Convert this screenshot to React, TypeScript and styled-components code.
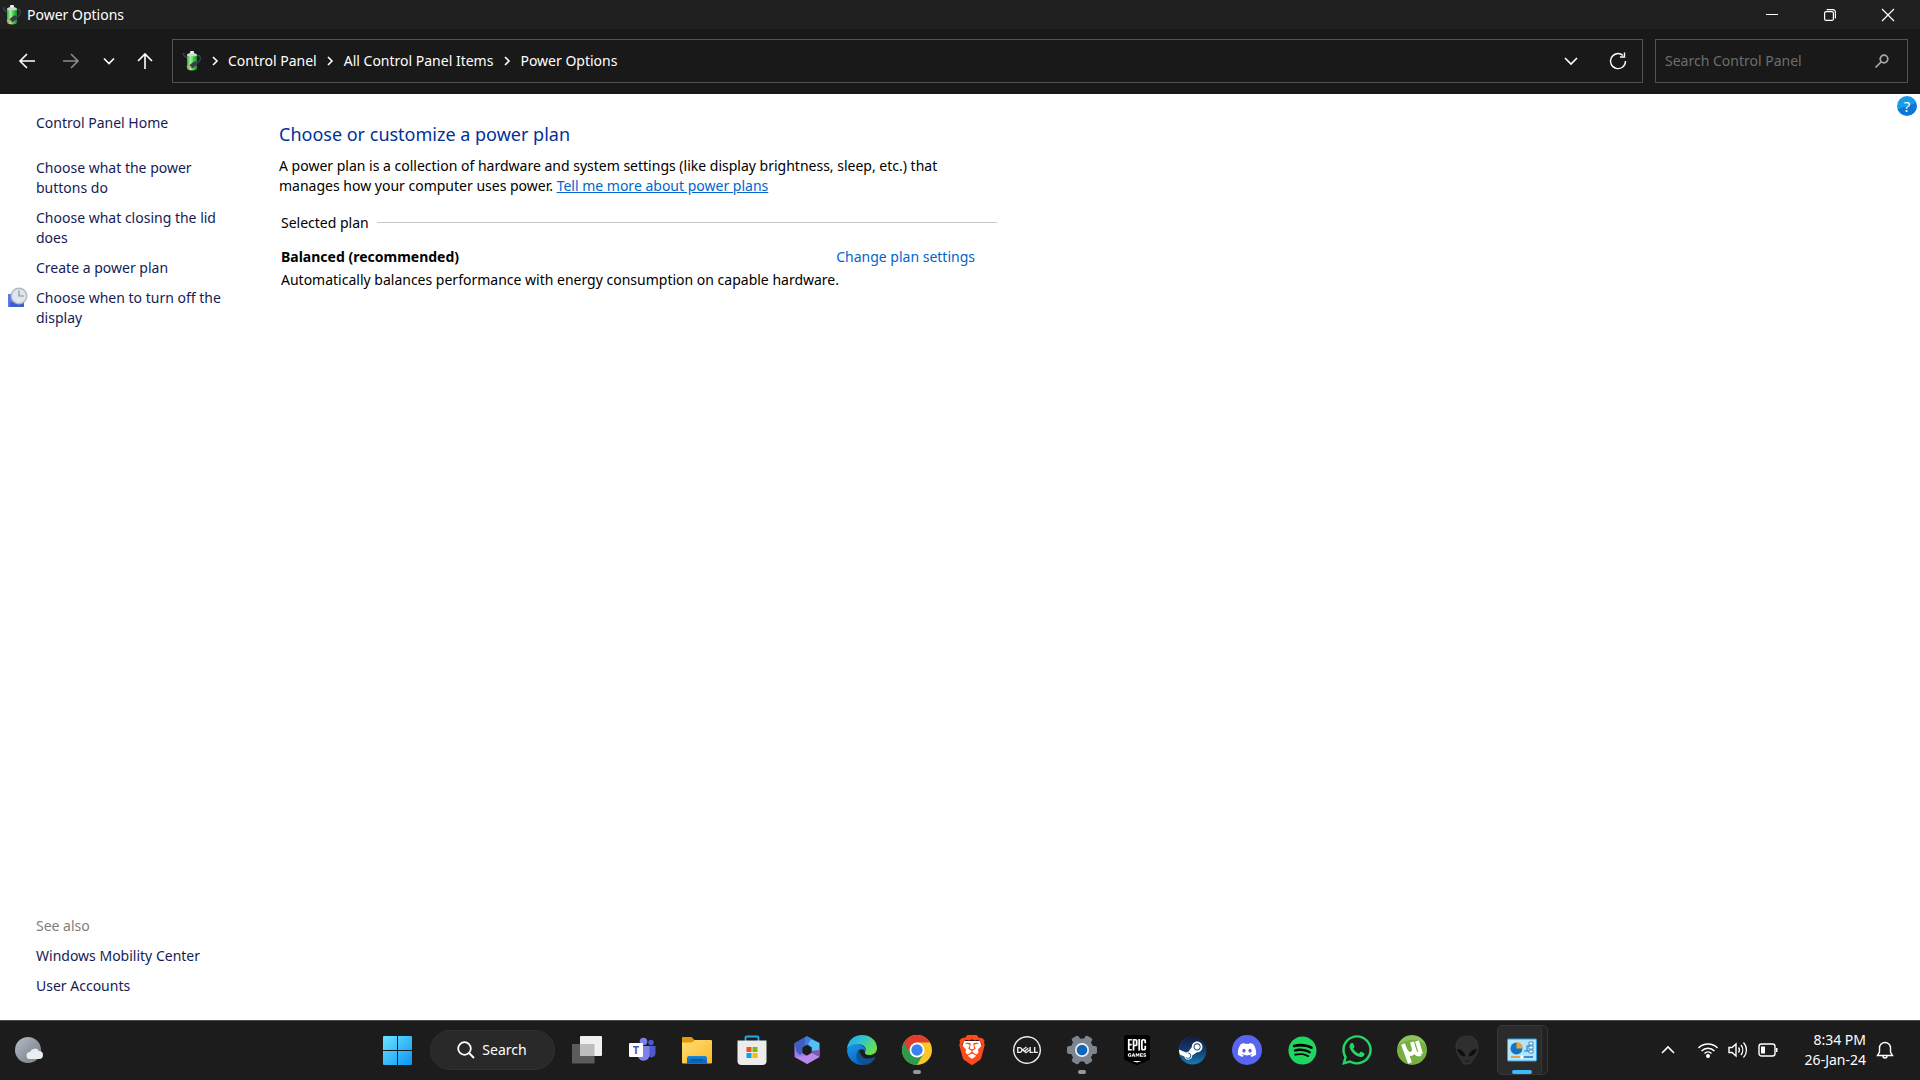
import React from "react";
import styled, { createGlobalStyle } from "styled-components";
import { FaDiscord, FaSpotify, FaSteam, FaWhatsapp } from "react-icons/fa";
import { SiBrave, SiDell, SiEpicgames } from "react-icons/si";

const GlobalStyle = createGlobalStyle`
  * { box-sizing: border-box; }
  body {
    margin: 0;
    background: #fff;
    color: #000;
    font-family: "Noto Sans", "Open Sans", sans-serif;
    font-size: 14px;
    line-height: 20px;
  }
  button, input { font: inherit; color: inherit; }
  button { border: 0; padding: 0; margin: 0; background: none; }
  a { text-decoration: none; color: inherit; }
  svg { display: block; flex: none; overflow: visible; }
`;

const Window = styled.div`
  min-height: 100vh;
  display: flex;
  flex-direction: column;
`;

/* ---------- title bar ---------- */
const TitleBar = styled.header`
  display: flex;
  align-items: center;
  height: 29px;
  padding: 0 3px;
  gap: 6px;
  background: #202020;
  color: #fff;
`;
const WindowTitle = styled.h1`
  flex: 1;
  margin: 0;
  font-size: 14px;
  font-weight: 400;
`;
const WindowControls = styled.div`
  display: flex;
`;
const IconButton = styled.button<{ $w: number; $h: number; $dim?: boolean }>`
  display: flex;
  flex: none;
  align-items: center;
  justify-content: center;
  width: ${(p) => p.$w}px;
  height: ${(p) => p.$h}px;
  color: ${(p) => (p.$dim ? "#8c8c8c" : "#fff")};
`;

/* ---------- navigation bar ---------- */
const NavBar = styled.nav`
  display: flex;
  align-items: center;
  height: 65px;
  padding: 0 12px 1px 8px;
  background: #191919;
  color: #fff;
`;
const HistoryButtons = styled.div`
  display: flex;
  padding-right: 4px;
`;
const AddressBar = styled.div`
  flex: 1;
  display: flex;
  align-items: center;
  height: 44px;
  padding: 0 0 0 10px;
  border: 1px solid #535353;
`;
const Crumbs = styled.ol`
  flex: 1;
  display: flex;
  align-items: center;
  margin: 0;
  padding: 0;
  list-style: none;
`;
const Crumb = styled.li`
  display: flex;
  align-items: center;
`;
const CrumbArrow = styled.span`
  display: flex;
  justify-content: center;
  width: 27px;
`;
const SearchBox = styled.label`
  display: flex;
  align-items: center;
  width: 253px;
  height: 44px;
  margin-left: 12px;
  padding: 0 18px 0 9px;
  border: 1px solid #535353;
`;
const SearchInput = styled.input`
  flex: 1;
  min-width: 0;
  padding: 0;
  border: 0;
  outline: 0;
  background: none;
  &::placeholder { color: #6d6d6d; opacity: 1; }
`;

/* ---------- body ---------- */
const Body = styled.div`
  flex: 1;
  display: flex;
`;
const Sidebar = styled.aside`
  display: flex;
  flex-direction: column;
  justify-content: space-between;
  width: 279px;
  padding: 19px 50px 24px 8px;
  color: #151c55;
`;
const TaskList = styled.ul`
  display: flex;
  flex-direction: column;
  gap: 10px;
  margin: 0;
  padding: 0;
  list-style: none;
`;
const TaskItem = styled.li`
  display: grid;
  grid-template-columns: 20px 1fr;
  column-gap: 8px;
`;
const TaskLink = styled.a`
  grid-column: 2;
`;
const HomeLink = styled.a`
  display: block;
  padding: 0 0 25px 28px;
`;
const SeeAlso = styled.h2`
  margin: 0 0 10px 28px;
  color: #808080;
  font-size: 14px;
  font-weight: 400;
`;
const Main = styled.main`
  flex: 0 1 718px;
  padding-top: 26px;
`;
const Heading = styled.h2`
  margin: 0;
  color: #003399;
  font-size: 18px;
  font-weight: 400;
  line-height: 28px;
`;
const Intro = styled.p`
  max-width: 690px;
  margin: 8px 0 0;
`;
const InlineLink = styled.a`
  color: #0066cc;
  text-decoration: underline;
`;
const PlanGroup = styled.section`
  padding-left: 2px;
`;
const PlanLegend = styled.h3`
  display: flex;
  align-items: center;
  gap: 8px;
  margin: 17px 0 14px;
  font-size: 14px;
  font-weight: 400;
  &::after {
    content: "";
    flex: 1;
    height: 1px;
    margin-bottom: 2px;
    background: #c8c8c8;
  }
`;
const PlanRow = styled.div`
  display: flex;
  justify-content: space-between;
  padding-right: 22px;
`;
const PlanName = styled.strong`
  font-weight: 700;
`;
const PlanSettings = styled.a`
  color: #0066cc;
`;
const PlanNote = styled.p`
  margin: 3px 0 0;
`;
const HelpButton = styled.button`
  width: 20px;
  height: 20px;
  margin: 2px 3px 0 auto;
  border-radius: 50%;
  background: linear-gradient(160deg, #1a9be6 50%, #0a78d6 50%);
  color: #fff;
  font-size: 15px;
`;

/* ---------- taskbar ---------- */
const Taskbar = styled.footer`
  display: grid;
  grid-template-columns: 1fr auto 1fr;
  align-items: center;
  height: 60px;
  box-shadow: inset 0 1px #484848;
  background: #1c1c1c;
  color: #fff;
`;
const WeatherButton = styled.button`
  justify-self: start;
  margin-left: 14px;
`;
const Apps = styled.div`
  display: flex;
  align-items: center;
  padding-right: 1px;
`;
const AppButton = styled.button`
  position: relative;
  display: flex;
  align-items: center;
  justify-content: center;
  width: 55px;
  height: 50px;
`;
const AppCard = styled.span`
  position: absolute;
  inset: 0 8px 0 2px;
  border: 1px solid #373737;
  border-radius: 5px;
  background: #2b2b2b;
`;
const AppCardBehind = styled(AppCard)`
  inset: 0 2px 0 8px;
  background: #222;
`;
const AppGlyph = styled.span`
  position: relative;
  display: flex;
`;
const RunMark = styled.span<{ $active?: boolean }>`
  position: absolute;
  bottom: 1px;
  width: ${(p) => (p.$active ? 20 : 8)}px;
  height: 4px;
  border-radius: 2px;
  background: ${(p) => (p.$active ? "#3db8ff" : "#999")};
`;
const SearchPill = styled.button`
  display: flex;
  align-items: center;
  justify-content: center;
  gap: 7px;
  width: 125px;
  height: 40px;
  margin: 0 5px;
  border: 1px solid #303030;
  border-radius: 20px;
  background: #292929;
`;
const Tray = styled.div`
  display: flex;
  align-items: center;
  justify-self: end;
  padding-right: 24px;
`;
const QuickSettings = styled.button`
  display: flex;
  gap: 10px;
  padding: 0 20px 0 18px;
`;
const Clock = styled.button`
  width: 68px;
  margin-right: 8px;
  text-align: right;
`;
const ClockLine = styled.span`
  display: block;
`;

/* ---------- drawings ---------- */
const line = { fill: "none", stroke: "currentColor", strokeWidth: 1.6 } as const;

const PowerIcon = () => (
  <svg width="18" height="20" viewBox="0 0 18 20">
    <defs>
      <linearGradient id="cell" x1="0" y1="0" x2="1" y2="0">
        <stop offset="0" stopColor="#2fae3e" /><stop offset="0.350" stopColor="#9df29a" /><stop offset="0.700" stopColor="#35c545" /><stop offset="1" stopColor="#178a2c" />
      </linearGradient>
    </defs>
    <path d="M.5 2c0 2 1 4 4 5M13 5c4-1.500 5 1 4 4-.8 2.500-3 3-4 4" fill="none" stroke="#39415c" strokeWidth="1.400" />
    <path d="M4 3h10v14.500c0 2.500-10 2.500-10 0z" fill="url(#cell)" />
    <path d="M4 4.500C4 .8 14 .8 14 4.500c-2 1.200-8 1.200-10 0z" fill="#cfd6d3" />
    <rect x="7" y="0" width="4" height="2.500" rx="1" fill="#eef1f0" />
    <path d="M6 14.500l5-4 4 .5-1 3-5 3.500z" fill="#3b3f45" />
    <path d="M3.500 15.500l3-1.500 2.500 2.500-3 1.500z" fill="#d0a878" />
  </svg>
);
const Arrow = ({ d }: { d: string }) => (
  <svg width="18" height="18" viewBox="0 0 18 18"><path d={d} {...line} /></svg>
);
const Chevron = ({ d, size = 14 }: { d: string; size?: number }) => (
  <svg width={size} height={size} viewBox="0 0 14 14"><path d={d} {...line} /></svg>
);
const DisplayClock = () => (
  <svg width="20" height="20" viewBox="0 0 20 20">
    <path d="M0 6h16v13H0z" fill="#5b7be0" />
    <path d="M2 14h14v5H2z" fill="#3d5fd2" />
    <circle cx="11" cy="8" r="8.500" fill="#b4b9bf" />
    <circle cx="11" cy="8" r="7" fill="#dfe7ee" />
    <path d="M11 2.500V8h5" fill="none" stroke="#8292a2" strokeWidth="1.200" />
  </svg>
);
const Weather = () => (
  <svg width="30" height="28" viewBox="0 0 30 28">
    <defs>
      <linearGradient id="moon" x1="0" y1="0" x2="1" y2="1">
        <stop offset="0" stopColor="#b6bfcc" /><stop offset="0.600" stopColor="#8b929b" /><stop offset="1" stopColor="#7d8f9e" />
      </linearGradient>
    </defs>
    <circle cx="14" cy="14" r="13" fill="url(#moon)" />
    <path d="M16 23a3.500 3.500 0 0 1 0-7 5 5 0 0 1 9-1 4 4 0 0 1 0 8z" fill="#e9eef0" />
  </svg>
);
const Svg30 = ({ children }: { children: React.ReactNode }) => (
  <svg width="30" height="30" viewBox="0 0 30 30">{children}</svg>
);
const WindowsLogo = () => (
  <Svg30>
    <defs>
      <linearGradient id="win" gradientUnits="userSpaceOnUse" x1="0" y1="0" x2="30" y2="30">
        <stop offset="0" stopColor="#6fe6ff" /><stop offset="1" stopColor="#0a95f5" />
      </linearGradient>
    </defs>
    <path d="M2 1h13v14H1V2a1 1 0 0 1 1-1zM16 1h13a1 1 0 0 1 1 1v13H16zM1 16h14v14H2a1 1 0 0 1-1-1zM16 16h14v13a1 1 0 0 1-1 1H16z" fill="url(#win)" />
  </Svg30>
);
const TaskView = () => (
  <Svg30>
    <rect x="0" y="9" width="22.500" height="19.500" rx="1" fill="#5b5b5b" />
    <rect x="8" y="1" width="22" height="20" rx="1" fill="#f0f0f0" />
    <rect x="8" y="9" width="14.500" height="12" fill="#bdbdbd" />
  </Svg30>
);
const Teams = () => (
  <Svg30>
    <circle cx="24" cy="7.500" r="2.700" fill="#5059c9" />
    <path d="M20 11h8.500v7.500a4 4 0 0 1-7 2.500z" fill="#5059c9" />
    <circle cx="16.500" cy="6.500" r="3.800" fill="#7b83eb" />
    <path d="M11 11h11.500v9a6 6 0 0 1-11.500 2z" fill="#7b83eb" />
    <rect x="2" y="8" width="14" height="14" rx="1" fill="#fff" />
    <text x="9" y="19" textAnchor="middle" fontSize="11" fontWeight="700" fill="#5059c9">T</text>
  </Svg30>
);
const Folder = () => (
  <Svg30>
    <defs>
      <linearGradient id="fold" x1="0" y1="0" x2="1" y2="1">
        <stop offset="0" stopColor="#ffdd73" /><stop offset="1" stopColor="#fbb92a" />
      </linearGradient>
      <linearGradient id="foldb" x1="0" y1="0" x2="0" y2="1">
        <stop offset="0" stopColor="#1787dc" /><stop offset="1" stopColor="#0b5fb0" />
      </linearGradient>
    </defs>
    <path d="M0 3a1 1 0 0 1 1-1h8.500l3 3H24v6H0z" fill="#e09a0b" />
    <path d="M0 7.500h10L13 5h16a1 1 0 0 1 1 1v21.500a1 1 0 0 1-1 1H1a1 1 0 0 1-1-1z" fill="url(#fold)" />
    <path d="M5 28.500V23a2 2 0 0 1 2-2h16a2 2 0 0 1 2 2v5.500z" fill="url(#foldb)" />
    <path d="M9 25h12" stroke="#0a4a92" strokeWidth="1.200" />
  </Svg30>
);
const Store = () => (
  <Svg30>
    <path d="M8.500 7V2.500a1 1 0 0 1 1-1h11a1 1 0 0 1 1 1V7" fill="none" stroke="#25a9ee" strokeWidth="1.800" />
    <path d="M.5 5.500h29v20.500a4 4 0 0 1-4 4h-21a4 4 0 0 1-4-4z" fill="#ececec" />
    <path d="M9.500 12h5v5h-5z" fill="#f25022" /><path d="M15.500 12h5v5h-5z" fill="#7fba00" />
    <path d="M9.500 18h5v5h-5z" fill="#00a4ef" /><path d="M15.500 18h5v5h-5z" fill="#ffb900" />
  </Svg30>
);
const Office = () => (
  <Svg30>
    <path d="M15 1l12.500 7-8 4.500L15 10l-4.500 2.500V4z" fill="#3f7fe0" />
    <path d="M27.500 8v13l-8-4v-5L16 9l3-4.500z" fill="#55c0f5" />
    <path d="M27.500 15v7L15 29v-8.500l4.500-3V16z" fill="#8058ab" />
    <path d="M15 29L2.500 22l6-3.500 6.500 2 4.500-2.500 8 4z" fill="#b98aec" />
    <path d="M2.500 22V8l8 4.500V18l4 3z" fill="#9a7bea" />
    <path d="M2.500 8L13 2v9l-3 2v5l-2 2-3.500-3z" fill="#3f5fc4" />
    <path d="M15 10l4.500 2.500v5L15 20.500l-4.500-3v-5z" fill="#1c1c1c" />
  </Svg30>
);
const Edge = () => (
  <Svg30>
    <defs>
      <linearGradient id="edt" x1="0" y1="0" x2="1" y2="0.500">
        <stop offset="0" stopColor="#2aa6e8" /><stop offset="0.500" stopColor="#2fc3cf" /><stop offset="1" stopColor="#6be04a" />
      </linearGradient>
      <linearGradient id="edb" x1="0" y1="0" x2="0.500" y2="1">
        <stop offset="0" stopColor="#1b9de2" /><stop offset="1" stopColor="#0b62c9" />
      </linearGradient>
    </defs>
    <path d="M0 14C1 5 7 0 15 0c9 0 15 6 15 13 0 5-4 7-7.500 7-4 0-5-1.500-4.500-3 2-4-1-7-5-7.500C7 9 2 11 0 14z" fill="url(#edt)" />
    <path d="M0 15c1-4 6-6.500 11-6 5 .5 8 4 7 7.500-1-3-6-3.500-7.500 1C9 22 13 29 17 30 8 31 0 24 0 15z" fill="url(#edb)" />
    <path d="M11 16c-4 6 0 13 6 14 5 0 9-3 11-7 .5-1-.5-1.200-1-.8-6 3-13 1-14-5z" fill="#12518f" />
  </Svg30>
);
const Chrome = () => (
  <Svg30>
    <circle cx="15" cy="15" r="15" fill="#fcc52a" />
    <path d="M15 15L2 7.500A15 15 0 0 0 15 30l6.500-11.200z" fill="#2a9c4c" />
    <path d="M15 7.500h13A15 15 0 0 0 2 7.500L8.500 18.700z" fill="#e33b2e" />
    <circle cx="15" cy="15" r="7.500" fill="#fff" />
    <circle cx="15" cy="15" r="5.700" fill="#3b82f0" />
  </Svg30>
);
const Stack = styled.span`
  display: grid;
  place-items: center;
  > * { grid-area: 1 / 1; }
`;
const Brave = () => (
  <Stack>
    <Svg30><path d="M7 6h16l2 6-5 12-5 3-5-3-5-12z" fill="#fff" /></Svg30>
    <SiBrave size={30} color="#ff4a1c" />
  </Stack>
);
const Gear = () => (
  <Svg30>
    <g fill="#7c858d">
      <circle cx="15" cy="15" r="11.500" />
      {[0, 60, 120].map((a) => (
        <rect key={a} x="0" y="11" width="30" height="8" rx="2" transform={`rotate(${a} 15 15)`} />
      ))}
    </g>
    <circle cx="15" cy="15" r="7" fill="#eef1f3" />
    <circle cx="15" cy="15" r="5.300" fill="#0f66b8" />
  </Svg30>
);
const Epic = () => (
  <Stack>
    <Svg30><path d="M4 2h22v22l-11 4-11-4z" fill="#fff" /></Svg30>
    <SiEpicgames size={30} color="#000" />
  </Stack>
);
const Steam = () => (
  <Stack>
    <Svg30>
      <defs>
        <linearGradient id="stm" gradientUnits="userSpaceOnUse" x1="0" y1="0" x2="0" y2="512">
          <stop offset="0" stopColor="#131c3f" /><stop offset="0.500" stopColor="#123c70" /><stop offset="1" stopColor="#1580b8" />
        </linearGradient>
      </defs>
      <circle cx="15" cy="15" r="13" fill="#fff" />
    </Svg30>
    <FaSteam size={29} fill="url(#stm)" />
  </Stack>
);
const Discord = () => (
  <Stack>
    <Svg30><circle cx="15" cy="15" r="15" fill="#5865f2" /></Svg30>
    <FaDiscord size={20} color="#fff" />
  </Stack>
);
const Spotify = () => (
  <Stack>
    <Svg30><circle cx="15" cy="15" r="13" fill="#000" /></Svg30>
    <FaSpotify size={29} color="#1ed760" />
  </Stack>
);
const Torrent = () => (
  <Svg30>
    <circle cx="15" cy="15" r="15" fill="#76b043" />
    <path d="M1 10A15 15 0 0 1 29 10C20 2 10 4 1 10z" fill="#8cc45a" />
    <path d="M6 9l7 19M8.500 15c2 6 9 5 8.500-1L15 7M17 14c1 5 4 6 7 5M24 19L20 6" fill="none" stroke="#fff" strokeWidth="4" />
  </Svg30>
);
const Alien = () => (
  <Svg30>
    <path d="M15 1C8 1 4 5 4 12c0 7 5 13 8 17h6c3-4 8-10 8-17C26 5 22 1 15 1z" fill="#2f2f2f" stroke="#3a3a3a" strokeWidth="0.800" />
    <path d="M5 14c4 0 8 3 8.500 7.500C9 21.500 6 18 5 14zM25 14c-4 0-8 3-8.500 7.500 4.500 0 7.500-3.500 8.500-7.500z" fill="#0e0e0e" />
    <path d="M13 26h4" stroke="#151515" />
  </Svg30>
);
const ControlPanel = () => (
  <Svg30>
    <rect x="0.500" y="4" width="29" height="22" rx="1" fill="#b4e4fb" stroke="#2a9fe0" />
    <circle cx="9.500" cy="13.500" r="6" fill="#0f76c6" />
    <path d="M9.500 13.500V7a6.500 6.500 0 0 1 6 6.500z" fill="#f2a12a" />
    <path d="M17 16h3v-5h3M20 16h3" fill="none" stroke="#1673b9" />
    <path d="M22 7h4v3h-4zM22 11h4v3h-4zM22 15h4v3h-4z" fill="#fff" stroke="#1673b9" strokeWidth="0.800" />
    <path d="M4 22h11" stroke="#f08c1a" strokeWidth="1.500" />
    <path d="M15 22h11" stroke="#1673b9" strokeWidth="1.500" />
    <circle cx="15" cy="22" r="1.800" fill="#fff" />
  </Svg30>
);

type App = { name: string; icon: React.ReactNode; running?: boolean; active?: boolean };
const apps: App[] = [
  { name: "Task View", icon: <TaskView /> },
  { name: "Microsoft Teams", icon: <Teams /> },
  { name: "File Explorer", icon: <Folder /> },
  { name: "Microsoft Store", icon: <Store /> },
  { name: "Microsoft 365", icon: <Office /> },
  { name: "Microsoft Edge", icon: <Edge /> },
  { name: "Google Chrome", icon: <Chrome />, running: true },
  { name: "Brave", icon: <Brave /> },
  { name: "Dell", icon: <SiDell size={28} color="#eee" /> },
  { name: "Settings", icon: <Gear />, running: true },
  { name: "Epic Games", icon: <Epic /> },
  { name: "Steam", icon: <Steam /> },
  { name: "Discord", icon: <Discord /> },
  { name: "Spotify", icon: <Spotify /> },
  { name: "WhatsApp", icon: <FaWhatsapp size={34} color="#25d366" /> },
  { name: "uTorrent", icon: <Torrent /> },
  { name: "Alienware", icon: <Alien /> },
  { name: "Control Panel", icon: <ControlPanel />, running: true, active: true },
];

const crumbs = ["Control Panel", "All Control Panel Items", "Power Options"];
const tasks = [
  { text: "Choose what the power buttons do" },
  { text: "Choose what closing the lid does" },
  { text: "Create a power plan" },
  { text: "Choose when to turn off the display", icon: <DisplayClock /> },
];
const seeAlso = ["Windows Mobility Center", "User Accounts"];

export default function App() {
  return (
    <Window>
      <GlobalStyle />
      <TitleBar>
        <PowerIcon />
        <WindowTitle>Power Options</WindowTitle>
        <WindowControls>
          <IconButton $w={58} $h={29} aria-label="Minimize">
            <svg width="12" height="12" viewBox="0 0 12 12"><path d="M0 5.500h12" stroke="#fff" /></svg>
          </IconButton>
          <IconButton $w={58} $h={29} aria-label="Restore">
            <svg width="12" height="12" viewBox="0 0 12 12" fill="none" stroke="#fff" strokeWidth="1.200">
              <rect x="0.600" y="2.600" width="8.800" height="8.800" rx="1.500" />
              <path d="M2.600 .6h6.400a2.400 2.400 0 0 1 2.400 2.400v6.400" />
            </svg>
          </IconButton>
          <IconButton $w={58} $h={29} aria-label="Close">
            <svg width="12" height="12" viewBox="0 0 12 12"><path d="M0 0l12 12M12 0L0 12" stroke="#fff" strokeWidth="1.200" /></svg>
          </IconButton>
        </WindowControls>
      </TitleBar>

      <NavBar aria-label="Location">
        <HistoryButtons>
          <IconButton $w={38} $h={44} aria-label="Back"><Arrow d="M17 9H2M9 2L2 9l7 7" /></IconButton>
          <IconButton $w={50} $h={44} $dim aria-label="Forward"><Arrow d="M1 9h15M9 2l7 7-7 7" /></IconButton>
          <IconButton $w={26} $h={44} aria-label="Recent locations"><Chevron d="M2 4.500l5 5 5-5" /></IconButton>
          <IconButton $w={46} $h={44} aria-label="Up"><Arrow d="M9 17V2M2 9l7-7 7 7" /></IconButton>
        </HistoryButtons>
        <AddressBar>
          <PowerIcon />
          <Crumbs>
            {crumbs.map((c) => (
              <Crumb key={c}>
                <CrumbArrow><Chevron d="M5 3l4 4-4 4" /></CrumbArrow>
                <a href="#crumb">{c}</a>
              </Crumb>
            ))}
          </Crumbs>
          <IconButton $w={46} $h={42} aria-label="Previous locations"><Chevron d="M1 4l6 6 6-6" /></IconButton>
          <IconButton $w={48} $h={42} aria-label="Refresh">
            <svg width="18" height="18" viewBox="0 0 18 18"><path d="M16.500 9A7.500 7.500 0 1 1 14 3.500M15.500 .5v4.500H11" {...line} strokeWidth="1.400" /></svg>
          </IconButton>
        </AddressBar>
        <SearchBox>
          <SearchInput type="search" placeholder="Search Control Panel" aria-label="Search Control Panel" />
          <svg width="14" height="14" viewBox="0 0 14 14" fill="none" stroke="#a8a8a8">
            <circle cx="9" cy="5" r="3.800" strokeWidth="1.700" /><path d="M6.500 7.500L.5 13.500" strokeWidth="1.700" />
          </svg>
        </SearchBox>
      </NavBar>

      <Body>
        <Sidebar>
          <div>
            <HomeLink href="#home">Control Panel Home</HomeLink>
            <TaskList>
              {tasks.map((t) => (
                <TaskItem key={t.text}>
                  {t.icon}
                  <TaskLink href="#task">{t.text}</TaskLink>
                </TaskItem>
              ))}
            </TaskList>
          </div>
          <div>
            <SeeAlso>See also</SeeAlso>
            <TaskList>
              {seeAlso.map((s) => (
                <TaskItem key={s}><TaskLink href="#also">{s}</TaskLink></TaskItem>
              ))}
            </TaskList>
          </div>
        </Sidebar>
        <Main>
          <Heading>Choose or customize a power plan</Heading>
          <Intro>
            A power plan is a collection of hardware and system settings (like display brightness, sleep, etc.) that
            manages how your computer uses power. <InlineLink href="#more">Tell me more about power plans</InlineLink>
          </Intro>
          <PlanGroup>
            <PlanLegend>Selected plan</PlanLegend>
            <PlanRow>
              <PlanName>Balanced (recommended)</PlanName>
              <PlanSettings href="#settings">Change plan settings</PlanSettings>
            </PlanRow>
            <PlanNote>Automatically balances performance with energy consumption on capable hardware.</PlanNote>
          </PlanGroup>
        </Main>
        <HelpButton aria-label="Help">?</HelpButton>
      </Body>

      <Taskbar>
        <WeatherButton aria-label="Weather"><Weather /></WeatherButton>
        <Apps>
          <AppButton aria-label="Start"><WindowsLogo /></AppButton>
          <SearchPill>
            <svg width="18" height="18" viewBox="0 0 18 18"><circle cx="7.500" cy="7.500" r="6.300" {...line} strokeWidth="1.800" /><path d="M12 12l5 5" {...line} strokeWidth="2" /></svg>
            Search
          </SearchPill>
          {apps.map((a) => (
            <AppButton key={a.name} aria-label={a.name}>
              {a.active && <><AppCardBehind /><AppCard /></>}
              <AppGlyph>{a.icon}</AppGlyph>
              {a.running && <RunMark $active={a.active} />}
            </AppButton>
          ))}
        </Apps>
        <Tray>
          <IconButton $w={24} $h={40} aria-label="Show hidden icons"><Chevron d="M1 10l6-6 6 6" /></IconButton>
          <QuickSettings aria-label="Network, volume and battery">
            <svg width="20" height="20" viewBox="0 0 20 20" {...line}>
              <path d="M.5 8a13.500 13.500 0 0 1 19 0M3.500 11a9 9 0 0 1 13 0M6.500 13.500a5 5 0 0 1 7 0" strokeWidth="1.500" />
              <circle cx="10" cy="16" r="1.200" fill="currentColor" />
            </svg>
            <svg width="20" height="20" viewBox="0 0 20 20" {...line}>
              <path d="M1 7.500h3L8 4v12l-4-3.500H1z" strokeWidth="1.400" />
              <path d="M10.500 7.500a4 4 0 0 1 0 5M13 5a8 8 0 0 1 0 10M15.500 2.500a11 11 0 0 1 0 15" strokeWidth="1.300" />
            </svg>
            <svg width="20" height="20" viewBox="0 0 20 20" {...line}>
              <rect x="1" y="4" width="16" height="12" rx="2.500" strokeWidth="1.400" />
              <path d="M3 6.500h4v7H3zM18 8h1.500v4H18z" fill="currentColor" stroke="none" />
            </svg>
          </QuickSettings>
          <Clock>
            <ClockLine>8:34 PM</ClockLine>
            <ClockLine>26-Jan-24</ClockLine>
          </Clock>
          <IconButton $w={22} $h={40} aria-label="Notifications">
            <svg width="18" height="18" viewBox="0 0 18 18" {...line}>
              <path d="M3.500 11V7a5.500 5.500 0 0 1 11 0v4l2 3.500h-15zM7 15a2 2 0 0 0 4 0" strokeWidth="1.400" />
            </svg>
          </IconButton>
        </Tray>
      </Taskbar>
    </Window>
  );
}
